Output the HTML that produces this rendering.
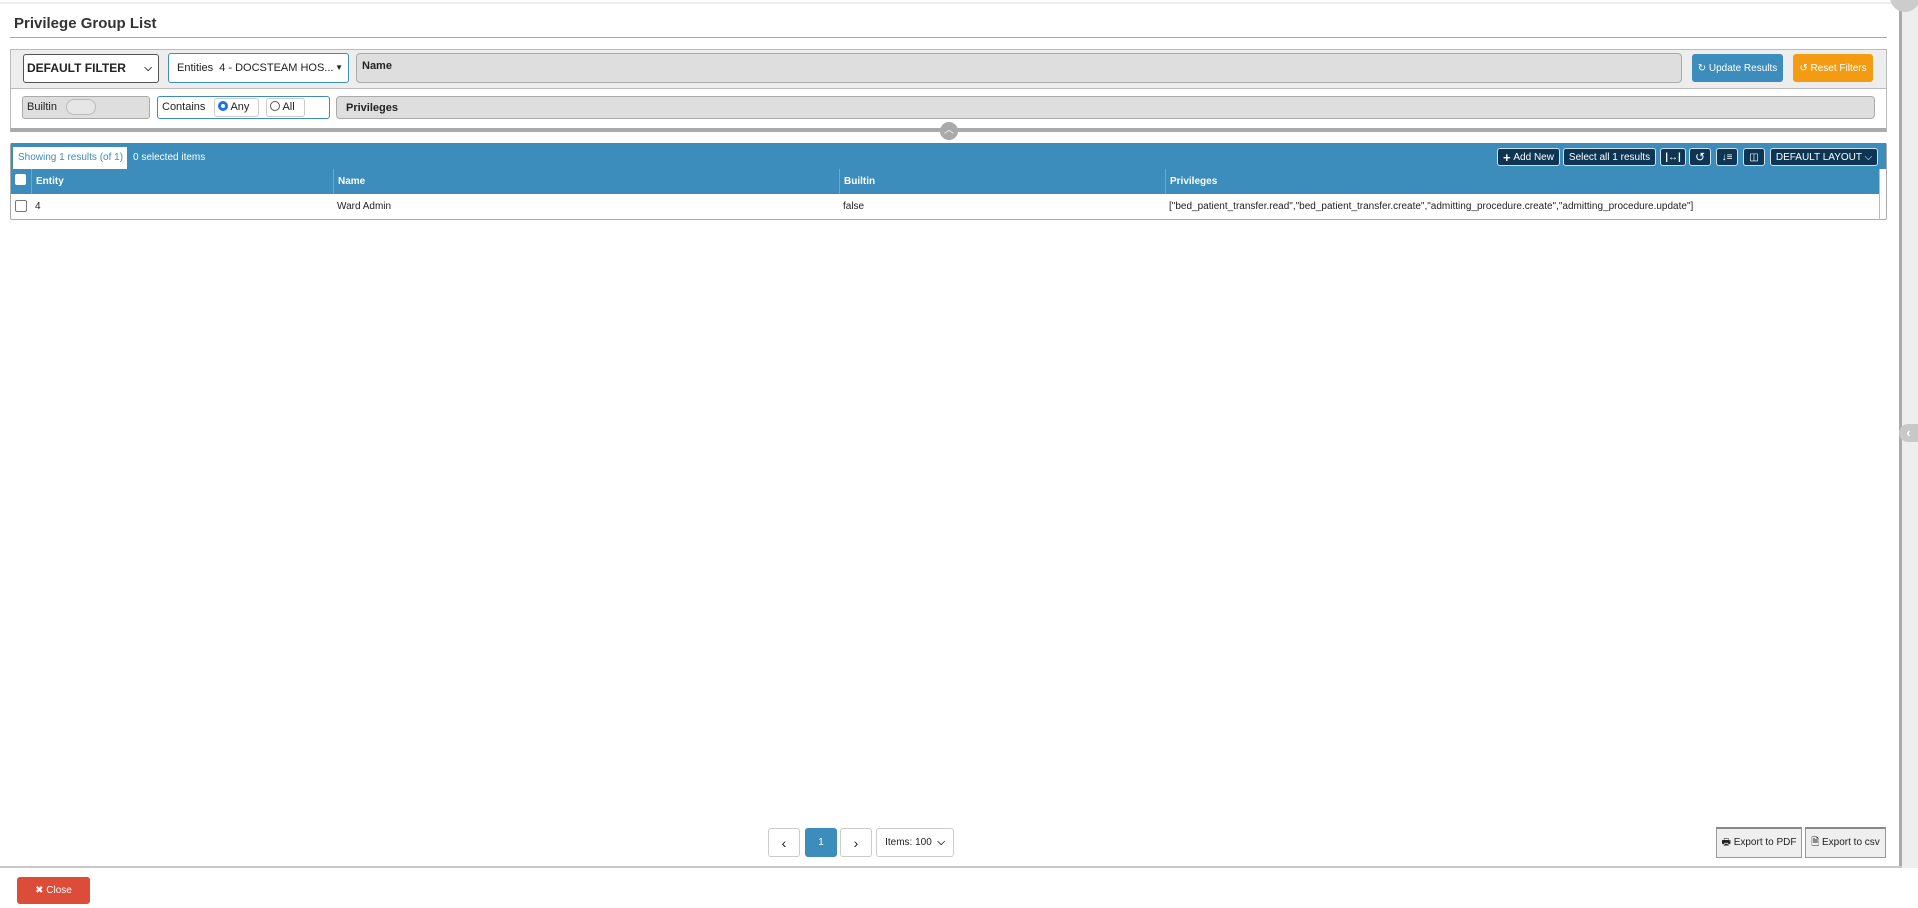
<!DOCTYPE html>
<html><head><meta charset="utf-8"><style>
*{box-sizing:border-box;margin:0;padding:0}
body{width:1918px;height:908px;position:relative;overflow:hidden;background:#fff;font-family:"Liberation Sans",sans-serif;font-size:12px;color:#222}
.a{position:absolute}
.btn{position:absolute;border-radius:3px;color:#fff;font-size:10px;display:flex;align-items:center;justify-content:center}
.nb{position:absolute;top:148px;height:18px;background:#0e3554;border:1px solid #cfe0ee;border-radius:3px;color:#fff;font-size:10px;display:flex;align-items:center;justify-content:center}
.col{position:absolute;top:0;height:25px;line-height:25px;color:#fff;font-weight:bold;font-size:10px;padding-left:4px;border-left:1px solid #6aa8cf}
.cell{position:absolute;top:0;height:25px;line-height:25px;font-size:10px;padding-left:4px}
.pg{position:absolute;top:828px;height:29px;border:1px solid #ccc;border-radius:3px;background:#fff;display:flex;align-items:center;justify-content:center;font-size:10px}
.ex{position:absolute;top:827px;height:31px;background:#efefef;border:1px solid #999;border-top:2px solid #888;font-size:10px;display:flex;align-items:center;justify-content:center}
</style></head><body>
<div class="a" style="left:0;top:2px;width:1898px;height:2px;background:#eee"></div>
<div class="a" style="left:1899px;top:0;width:3px;height:868px;background:#aaa"></div>
<div class="a" style="left:1902px;top:0;width:16px;height:868px;background:#eee"></div>
<div class="a" style="left:1890px;top:-18px;width:30px;height:30px;border-radius:50%;background:#ccc"></div>
<div class="a" style="left:1899px;top:424px;width:19px;height:18px;border-radius:9px 0 0 9px;background:#c8c8c8;color:#fff;font-size:13px;line-height:18px;text-align:center;font-weight:bold">‹</div>

<div class="a" style="left:14px;top:15px;font-size:15px;font-weight:bold;color:#333">Privilege Group List</div>
<div class="a" style="left:10px;top:37px;width:1877px;height:1px;background:#aaa"></div>

<div class="a" style="left:10px;top:49px;width:1877px;height:83px;border:1px solid #bbb;border-bottom:4px solid #aaa;background:#fff"></div>
<div class="a" style="left:11px;top:50px;width:1875px;height:39px;background:#ededed;border-bottom:1px solid #bbb"></div>
<div class="a" style="left:23px;top:54px;width:136px;height:29px;border:1px solid #555;border-radius:3px;background:#fff;font-weight:bold;font-size:12px;line-height:27px;padding-left:3px">DEFAULT FILTER<span style="position:absolute;right:6px;font-size:10px">&#x2335;</span></div>
<div class="a" style="left:168px;top:53px;width:181px;height:30px;border:1px solid #3c8dbc;border-radius:3px;background:#fff;font-size:11px;line-height:28px;padding-left:8px">Entities &nbsp;4 - DOCSTEAM HOS...<span style="position:absolute;right:5px;font-size:8px">▼</span></div>
<div class="a" style="left:356px;top:53px;width:1326px;height:30px;border:1px solid #aaa;border-radius:4px;background:#dedede;font-size:11px;font-weight:bold;padding:6px 5px">Name</div>
<div class="btn" style="left:1692px;top:54px;width:91px;height:28px;background:#3c8dbc">&#x21bb; Update Results</div>
<div class="btn" style="left:1793px;top:54px;width:80px;height:28px;background:#f39c12">&#x21ba; Reset Filters</div>

<div class="a" style="left:22px;top:96px;width:128px;height:23px;border:1px solid #aaa;border-radius:3px;background:#dedede;font-size:11px;line-height:21px;padding-left:4px">Builtin<span style="position:absolute;left:43px;top:2px;width:30px;height:16px;border:1px solid #bbb;border-radius:8px;background:#e6e6e6"></span></div>
<div class="a" style="left:157px;top:96px;width:173px;height:23px;border:1px solid #3c8dbc;border-radius:3px;background:#fff;font-size:11px;line-height:21px;padding-left:4px">Contains
<span style="position:absolute;left:56px;top:1px;width:45px;height:19px;border:1px solid #ccc;border-radius:3px;line-height:17px;padding-left:3px"><span style="display:inline-block;width:10px;height:10px;border-radius:50%;border:3px solid #1a73e8;vertical-align:-1px"></span> Any</span>
<span style="position:absolute;left:108px;top:1px;width:39px;height:19px;border:1px solid #ccc;border-radius:3px;line-height:17px;padding-left:3px"><span style="display:inline-block;width:10px;height:10px;border-radius:50%;border:1px solid #555;vertical-align:-1px"></span> All</span></div>
<div class="a" style="left:336px;top:96px;width:1539px;height:23px;border:1px solid #aaa;border-radius:4px;background:#dedede;font-size:11px;font-weight:bold;line-height:22px;padding-left:9px">Privileges</div>
<div class="a" style="left:940px;top:122px;width:18px;height:18px;border-radius:50%;background:#aaa;color:#fff;font-size:10px;line-height:18px;text-align:center">︿</div>

<div class="a" style="left:10px;top:143px;width:1877px;height:77px;border:1px solid #aaa;border-radius:2px;background:#fff"></div>
<div class="a" style="left:11px;top:143px;width:1875px;height:26px;background:#3c8dbc"></div>
<div class="a" style="left:13px;top:147px;width:114px;height:22px;background:#fff;color:#3c8dbc;font-size:10px;line-height:22px;padding-left:5px">Showing 1 results (of 1)</div>
<div class="a" style="left:133px;top:147px;color:#fff;font-size:10px;line-height:22px">0 selected items</div>
<div class="nb" style="left:1497px;width:63px"><b style="font-size:13px">+</b>&nbsp;Add New</div>
<div class="nb" style="left:1563px;width:93px">Select all 1 results</div>
<div class="nb" style="left:1660px;width:26px;font-weight:bold">|↔|</div>
<div class="nb" style="left:1689px;width:22px;font-size:12px">↺</div>
<div class="nb" style="left:1716px;width:22px">↓≡</div>
<div class="nb" style="left:1743px;width:22px">◫</div>
<div class="nb" style="left:1770px;width:108px">DEFAULT LAYOUT &#x2335;</div>

<div class="a" style="left:11px;top:169px;width:1868px;height:25px;background:#3c8dbc">
<span class="a" style="left:4px;top:5px;width:11px;height:11px;background:#fff;border-radius:2px"></span>
<div class="col" style="left:20px">Entity</div>
<div class="col" style="left:322px">Name</div>
<div class="col" style="left:828px">Builtin</div>
<div class="col" style="left:1154px">Privileges</div>
</div>
<div class="a" style="left:1879px;top:169px;width:1px;height:51px;background:#bbb"></div>
<div class="a" style="left:11px;top:194px;width:1868px;height:25px">
<span class="a" style="left:4px;top:6px;width:12px;height:12px;border:1px solid #777;border-radius:2px"></span>
<div class="cell" style="left:20px">4</div>
<div class="cell" style="left:322px">Ward Admin</div>
<div class="cell" style="left:828px">false</div>
<div class="cell" style="left:1154px">["bed_patient_transfer.read","bed_patient_transfer.create","admitting_procedure.create","admitting_procedure.update"]</div>
</div>

<div class="pg" style="left:768px;width:32px;font-size:14px">‹</div>
<div class="pg" style="left:805px;width:32px;background:#3c8dbc;border-color:#3c8dbc;color:#fff">1</div>
<div class="pg" style="left:840px;width:32px;font-size:14px">›</div>
<div class="pg" style="left:876px;width:78px">Items: 100 &nbsp;<b>&#x2335;</b></div>
<div class="ex" style="left:1716px;width:86px">🖶 Export to PDF</div>
<div class="ex" style="left:1805px;width:81px">🗎 Export to csv</div>

<div class="a" style="left:0;top:866px;width:1902px;height:2px;background:#c8c8c8"></div>
<div class="btn" style="left:17px;top:877px;width:73px;height:27px;background:#dd4b39;font-size:10px">&#x2716;&nbsp;Close</div>
</body></html>
